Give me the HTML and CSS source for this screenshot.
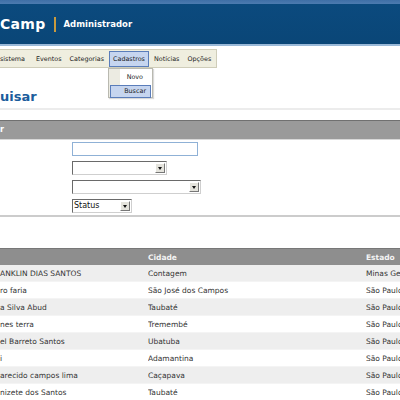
FILE: index.html
```html
<!DOCTYPE html>
<html>
<head>
<meta charset="utf-8">
<link rel="stylesheet" href="styles.css">
</head>
<body>
<div class="page">
  <header class="header">
    <span class="logo">Camp</span>
    <span class="sep"></span>
    <span class="role">Administrador</span>
  </header>

  <nav class="menubar">
    <span class="mi mi-first">sistema</span>
    <span class="mi">Eventos</span>
    <span class="mi">Categorias</span>
    <span class="mi mi-active">Cadastros
      <div class="dropdown">
        <div class="dd-item">Novo</div>
        <div class="dd-item dd-hover">Buscar</div>
      </div>
    </span>
    <span class="mi">Notícias</span>
    <span class="mi">Opções</span>
  </nav>

  <h1 class="title">uisar</h1>

  <div class="section">
    <div class="section-head">r</div>
    <div class="form">
      <div class="frow"><span class="input"></span></div>
      <div class="frow"><span class="select w95"><span class="sv"></span><span class="arrow"></span></span></div>
      <div class="frow"><span class="select w128"><span class="sv"></span><span class="arrow"></span></span></div>
      <div class="frow"><span class="select w60"><span class="sv">Status</span><span class="arrow"></span></span></div>
    </div>
  </div>

  <table class="grid">
    <thead>
      <tr><th class="c1"></th><th class="c2">Cidade</th><th class="c3">Estado</th></tr>
    </thead>
    <tbody>
      <tr class="odd"><td>ANKLIN DIAS SANTOS</td><td>Contagem</td><td>Minas Gerais</td></tr>
      <tr><td>ro faria</td><td>São José dos Campos</td><td>São Paulo</td></tr>
      <tr class="odd"><td>a Silva Abud</td><td>Taubaté</td><td>São Paulo</td></tr>
      <tr><td>nes terra</td><td>Tremembé</td><td>São Paulo</td></tr>
      <tr class="odd"><td>el Barreto Santos</td><td>Ubatuba</td><td>São Paulo</td></tr>
      <tr><td>i</td><td>Adamantina</td><td>São Paulo</td></tr>
      <tr class="odd"><td>arecido campos lima</td><td>Caçapava</td><td>São Paulo</td></tr>
      <tr><td>nizete dos Santos</td><td>Taubaté</td><td>São Paulo</td></tr>
    </tbody>
  </table>
</div>
</body>
</html>
```

FILE: styles.css
```css
html, body {
  margin: 0;
  padding: 0;
  background: #ffffff;
}
.page {
  width: 400px;
  height: 400px;
  overflow: hidden;
  font-family: "DejaVu Sans", Verdana, sans-serif;
  color: #333;
}
.header {
  height: 40px;
  padding-top: 4px;
  background: linear-gradient(#3f6fa6 0, #4c7bb0 4px, #0b4a7e 4px, #0a4677 100%);
  border-bottom: 2px solid #9ab9d8;
  display: flex;
  align-items: center;
}
.logo {
  color: #fff;
  font-weight: bold;
  font-size: 14px;
  letter-spacing: 0.3px;
}
.sep {
  width: 2px;
  height: 15px;
  background: #c99a3e;
  margin-left: 8px;
  margin-right: 8px;
}
.role {
  color: #fff;
  font-weight: bold;
  font-size: 8.5px;
}
.menubar {
  margin-top: 3px;
  width: 216px;
  height: 17px;
  background: #efeedf;
  border: 1px solid #cfcdb9;
  border-left: none;
  display: flex;
  align-items: center;
  font-size: 6.4px;
  color: #222;
}
.mi {
  padding: 0 4px;
  line-height: 14px;
  position: relative;
}
.mi-first { padding-left: 0; padding-right: 7px; }
.mi-active {
  background: #c6d5ef;
  border: 1px solid #5a7dba;
  padding: 0 3px;
  margin: 0 1px;
}
.dropdown {
  position: absolute;
  left: -2px;
  top: 16px;
  width: 45px;
  height: 30px;
  background: linear-gradient(90deg, #ecebe2 0 11px, #ffffff 11px);
  border: 1px solid #b9b9b0;
  box-shadow: 1px 1px 1px rgba(0,0,0,0.15);
  box-sizing: border-box;
  padding-top: 2px;
}
.dd-item {
  height: 13px;
  line-height: 13px;
  text-align: right;
  padding-right: 6px;
  margin: 0 1px;
  color: #222;
}
.dd-item:first-child { padding-right: 8px; margin-bottom: 1px; }
.dd-hover {
  background: #c6d5ef;
  border: 1px solid #5a7dba;
  padding-right: 4px;
  line-height: 11px;
  height: 11px;
}
.title {
  margin: 20px 0 0 0;
  font-size: 13px;
  font-weight: bold;
  color: #1b5c9c;
  height: 20px;
  line-height: 17px;
  border-bottom: 2px solid #ececec;
}
.section {
  margin-top: 10px;
  border-bottom: 2px solid #cccccc;
  padding-bottom: 2px;
}
.section-head {
  height: 18px;
  line-height: 18px;
  background: #9a9a9a;
  border-top: 1px solid #707070;
  border-bottom: 1px solid #d8d8d8;
  color: #fff;
  font-weight: bold;
  font-size: 8px;
}
.form {
  padding: 2px 0 0 72px;
  display: flex;
  flex-direction: column;
  gap: 5px;
}
.frow { height: 14px; display: flex; }
.input {
  width: 126px;
  height: 14px;
  border: 1px solid #8fb1d6;
  box-sizing: border-box;
  background: #fff;
}
.select {
  height: 14px;
  display: flex;
  border: 1px solid #6a6a6a;
  border-right-color: #cfcfcf;
  border-bottom-color: #cfcfcf;
  box-sizing: border-box;
  background: #fff;
}
.w95 { width: 95px; }
.w128 { width: 129px; }
.w60 { width: 60px; }
.sv {
  flex: 1;
  font-size: 8px;
  line-height: 12px;
  padding-left: 1px;
  color: #111;
}
.arrow {
  width: 10px;
  height: 10px;
  margin: 1px;
  background: #e4e3dc;
  border: 1px solid #fff;
  border-right-color: #777;
  border-bottom-color: #777;
  box-sizing: border-box;
  position: relative;
}
.arrow::after {
  content: "";
  position: absolute;
  left: 2px;
  top: 3px;
  border-left: 2px solid transparent;
  border-right: 2px solid transparent;
  border-top: 3px solid #111;
}
.grid {
  margin-top: 31px;
  width: 400px;
  border-collapse: collapse;
  font-size: 7.5px;
  table-layout: fixed;
}
.grid th {
  height: 16px;
  background: #8e8e8e;
  border-top: 1px solid #777;
  color: #f4f4f4;
  font-weight: bold;
  text-align: left;
  padding: 0;
}
.c1 { width: 148px; }
.c2 { width: 218px; }
.grid td {
  height: 16px;
  padding: 0;
  white-space: nowrap;
  overflow: hidden;
  color: #333;
  border-bottom: 1px solid #f4f4f4;
}
.grid tr.odd td { background: #eeeeee; }
```
